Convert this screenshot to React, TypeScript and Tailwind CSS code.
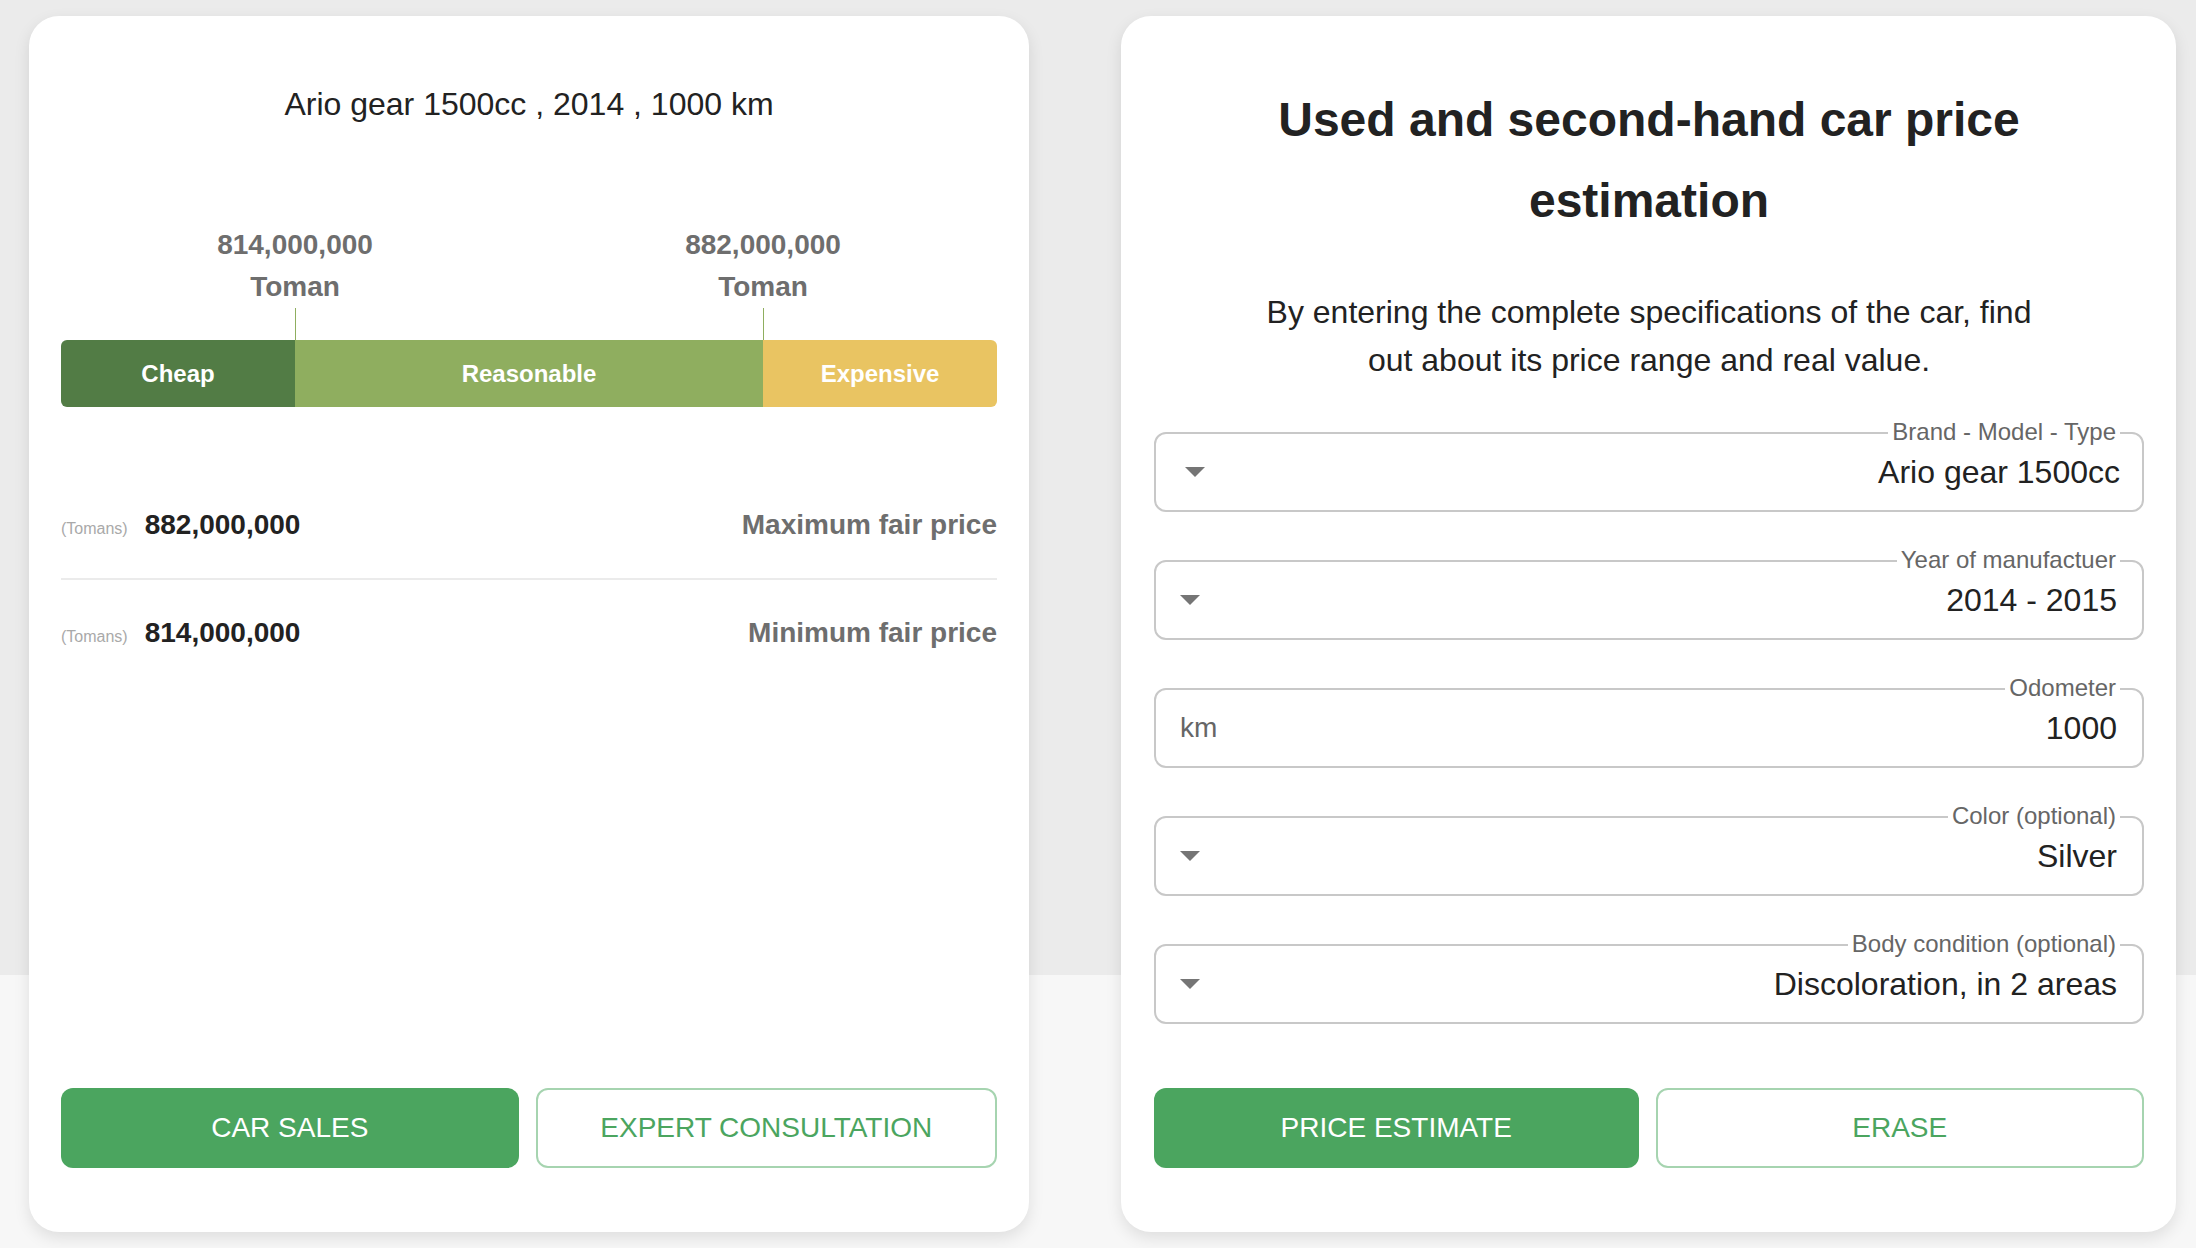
import { ReactNode } from 'react';

const Caret = () => (
  <svg width="20" height="10" viewBox="0 0 20 10" className="shrink-0">
    <path d="M0 0h20L10 10z" fill="#757575" />
  </svg>
);

type FieldProps = {
  label: string;
  value: string;
  start: ReactNode;
  first?: boolean;
};

const Field = ({ label, value, start, first }: FieldProps) => (
  <div
    className={`relative flex h-[80px] items-center justify-between rounded-xl border-2 border-[#c8c8c8] ${
      first ? 'pl-[29px] pr-[22px]' : 'pl-[24px] pr-[25px]'
    }`}
  >
    <span className="absolute -top-[14px] right-[22px] bg-white px-[4px] text-[24px] leading-[24px] text-[#666]">
      {label}
    </span>
    {start}
    <span className="text-[32px] leading-[38px] text-[#222]">{value}</span>
  </div>
);

const PriceRow = ({ amount, label }: { amount: string; label: string }) => (
  <div className="flex h-[106px] items-center justify-between">
    <div className="flex items-baseline gap-[17px]">
      <span className="text-[16px] text-[#a9a9a9]">(Tomans)</span>
      <span className="text-[28px] font-bold text-[#222]">{amount}</span>
    </div>
    <span className="text-[28px] font-bold text-[#6e6e6e]">{label}</span>
  </div>
);

const ResultCard = () => (
  <div className="flex h-[1216px] w-[1000px] flex-col rounded-[30px] bg-white px-[32px] pb-[64px] pt-[64px] shadow-[0_6px_16px_rgba(0,0,0,0.1)]">
    <h2 className="text-center text-[32px] leading-[48px] text-[#222]">
      Ario gear 1500cc , 2014 , 1000 km
    </h2>

    <div className="mt-[96px]">
      <div className="grid grid-cols-4 text-[28px] font-bold leading-[42px] text-[#6e6e6e]">
        <div className="col-span-2 text-center">
          814,000,000
          <br />
          Toman
        </div>
        <div className="col-span-2 text-center">
          882,000,000
          <br />
          Toman
        </div>
      </div>
      <div className="grid h-[32px] grid-cols-4">
        <div className="col-span-2 flex justify-center">
          <div className="w-px bg-[#8fae5f]" />
        </div>
        <div className="col-span-2 flex justify-center">
          <div className="w-px bg-[#8fae5f]" />
        </div>
      </div>
      <div className="grid h-[67px] grid-cols-[1fr_2fr_1fr] overflow-hidden rounded-md text-[24px] font-bold text-white">
        <div className="flex items-center justify-center bg-[#527c45]">Cheap</div>
        <div className="flex items-center justify-center bg-[#8fae5f]">Reasonable</div>
        <div className="flex items-center justify-center bg-[#e9c462]">Expensive</div>
      </div>
    </div>

    <div className="mt-[65px]">
      <PriceRow amount="882,000,000" label="Maximum fair price" />
      <div className="h-[2px] bg-[#ebebeb]" />
      <PriceRow amount="814,000,000" label="Minimum fair price" />
    </div>

    <div className="mt-auto flex gap-[17px]">
      <button className="h-[80px] flex-1 rounded-xl bg-[#4ba55f] text-[28px] text-white">CAR SALES</button>
      <button className="h-[80px] flex-1 rounded-xl border-2 border-[#a6d4b0] bg-white text-[28px] text-[#4ba55f]">
        EXPERT CONSULTATION
      </button>
    </div>
  </div>
);

const EstimateCard = () => (
  <div className="flex h-[1216px] w-[1055px] flex-col rounded-[30px] bg-white pb-[64px] pl-[33px] pr-[32px] pt-[63px] shadow-[0_6px_16px_rgba(0,0,0,0.1)]">
    <div className="mx-auto max-w-[790px] text-center text-[#222]">
      <h1 className="text-[48px] font-bold leading-[81px]">Used and second-hand car price estimation</h1>
      <p className="mt-[47px] text-[32px] leading-[48px]">
        By entering the complete specifications of the car, find out about its price range and real value.
      </p>
    </div>

    <div className="mt-[48px] flex flex-col gap-[48px]">
      <Field first label="Brand - Model - Type" value="Ario gear 1500cc" start={<Caret />} />
      <Field label="Year of manufactuer" value="2014 - 2015" start={<Caret />} />
      <Field
        label="Odometer"
        value="1000"
        start={<span className="text-[28px] text-[#666]">km</span>}
      />
      <Field label="Color (optional)" value="Silver" start={<Caret />} />
      <Field label="Body condition (optional)" value="Discoloration, in 2 areas" start={<Caret />} />
    </div>

    <div className="mt-auto flex gap-[17px]">
      <button className="h-[80px] flex-1 rounded-xl bg-[#4ba55f] text-[28px] text-white">PRICE ESTIMATE</button>
      <button className="h-[80px] flex-1 rounded-xl border-2 border-[#a6d4b0] bg-white text-[28px] text-[#4ba55f]">
        ERASE
      </button>
    </div>
  </div>
);

export default function App() {
  return (
    <div className="min-h-[1248px] bg-[linear-gradient(to_bottom,#ebebeb_0,#ebebeb_975px,#f7f7f7_975px)] font-['Liberation_Sans',Arial,sans-serif]">
      <div className="flex gap-[92px] pl-[29px] pt-[16px]">
        <ResultCard />
        <EstimateCard />
      </div>
    </div>
  );
}
